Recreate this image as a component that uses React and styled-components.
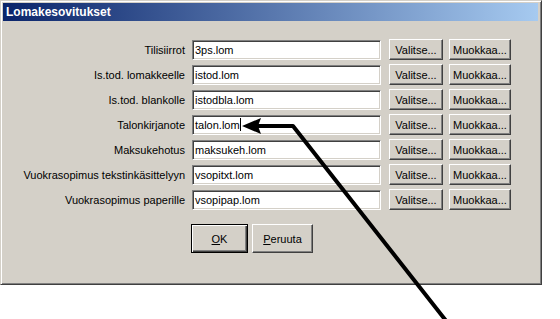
import styled, { createGlobalStyle } from 'styled-components';

const GlobalStyle = createGlobalStyle`
  html, body {
    margin: 0;
    padding: 0;
    background: #ffffff;
  }
  body {
    font-family: 'Liberation Sans', Arial, sans-serif;
    font-size: 11px;
    color: #000;
  }
`;

const Page = styled.div`
  position: relative;
  width: 560px;
  height: 319px;
  overflow: hidden;
  background: #fff;
`;

const Window = styled.div`
  box-sizing: border-box;
  width: 542px;
  height: 285px;
  background: #d4d0c8;
  border: 1px solid;
  border-color: #d4d0c8 #404040 #404040 #d4d0c8;
  box-shadow: inset 1px 1px 0 #fff, inset -1px -1px 0 #808080;
  padding: 2px 3px 2px 2px;
  display: flex;
  flex-direction: column;
`;

const TitleBar = styled.div`
  height: 18px;
  display: flex;
  align-items: center;
  padding-left: 3px;
  background: linear-gradient(to right, #0a246a, #a6caf0);
  color: #fff;
  font-weight: bold;
  font-size: 12px;
`;

const Body = styled.div`
  padding: 18px 0 0 0;
  display: flex;
  flex-direction: column;
`;

const Form = styled.div`
  display: grid;
  grid-template-columns: 183px 191px 54px 62px;
  column-gap: 6px;
  row-gap: 4px;
  align-items: center;
  & > :nth-child(4n + 2) {
    margin-right: 2px;
  }
`;

const Label = styled.div`
  text-align: right;
  white-space: nowrap;
  padding-right: 1px;
`;

const Field = styled.div`
  box-sizing: border-box;
  height: 20px;
  background: #fff;
  border: 1px solid;
  border-color: #808080 #fff #fff #808080;
  box-shadow: inset 1px 1px 0 #404040, inset -1px -1px 0 #d4d0c8;
  padding: 0 2px;
  display: flex;
  align-items: center;
  white-space: nowrap;
`;

const Caret = styled.span`
  display: inline-block;
  width: 1px;
  height: 13px;
  background: #000;
`;

const Button = styled.div`
  box-sizing: border-box;
  height: ${(p) => p.$h || 21}px;
  width: ${(p) => p.$w}px;
  background: #d4d0c8;
  border: 1px solid;
  border-color: ${(p) => (p.$default ? '#000' : '#fff #404040 #404040 #fff')};
  box-shadow: ${(p) =>
    p.$default
      ? 'inset 1px 1px 0 #fff, inset -1px -1px 0 #404040, inset -2px -2px 0 #808080'
      : 'inset -1px -1px 0 #808080'};
  display: flex;
  align-items: center;
  justify-content: center;
  white-space: nowrap;
`;

const Actions = styled.div`
  display: flex;
  gap: 4px;
  margin: 14px 0 0 188px;
`;

const Key = styled.span`
  text-decoration: underline;
`;

const Overlay = styled.svg`
  position: absolute;
  left: 0;
  top: 0;
  pointer-events: none;
`;

const rows = [
  ['Tilisiirrot', '3ps.lom'],
  ['Is.tod. lomakkeelle', 'istod.lom'],
  ['Is.tod. blankolle', 'istodbla.lom'],
  ['Talonkirjanote', 'talon.lom', true],
  ['Maksukehotus', 'maksukeh.lom'],
  ['Vuokrasopimus tekstinkäsittelyyn', 'vsopitxt.lom'],
  ['Vuokrasopimus paperille', 'vsopipap.lom'],
];

export default function App() {
  return (
    <Page>
      <GlobalStyle />
      <Window>
        <TitleBar>Lomakesovitukset</TitleBar>
        <Body>
          <Form>
            {rows.map(([label, value, focused]) => [
              <Label key={label + 'l'}>{label}</Label>,
              <Field key={label + 'f'}>
                {value}
                {focused && <Caret />}
              </Field>,
              <Button key={label + 'v'} $w={54}>Valitse...</Button>,
              <Button key={label + 'm'} $w={62}>Muokkaa...</Button>,
            ])}
          </Form>
          <Actions>
            <Button $w={57} $h={29} $default>
              <Key>O</Key>K
            </Button>
            <Button $w={61} $h={29}>
              <Key>P</Key>eruuta
            </Button>
          </Actions>
        </Body>
      </Window>
      <Overlay width="560" height="319" viewBox="0 0 560 319">
        <polyline
          points="447,322 293,126 256,126"
          fill="none"
          stroke="#000"
          strokeWidth="4"
          strokeLinejoin="round"
        />
        <polygon points="242,126 261,118 258,126 261,134" fill="#000" />
      </Overlay>
    </Page>
  );
}
